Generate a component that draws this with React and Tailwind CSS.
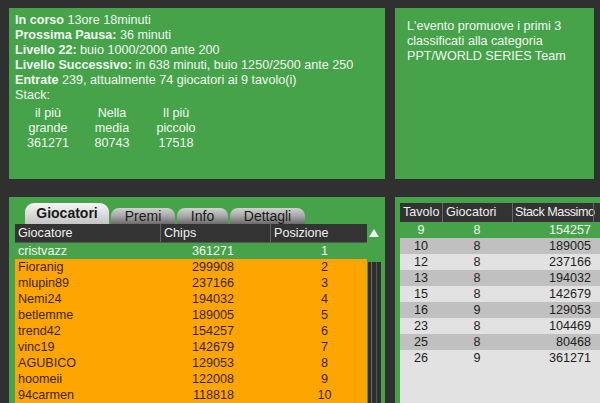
const players = [
  ['cristvazz', '361271', '1'],
  ['Fioranig', '299908', '2'],
  ['mlupin89', '237166', '3'],
  ['Nemi24', '194032', '4'],
  ['betlemme', '189005', '5'],
  ['trend42', '154257', '6'],
  ['vinc19', '142679', '7'],
  ['AGUBICO', '129053', '8'],
  ['hoomeii', '122008', '9'],
  ['94carmen', '118818', '10'],
]

const tables = [
  ['9', '8', '154257'],
  ['10', '8', '189005'],
  ['12', '8', '237166'],
  ['13', '8', '194032'],
  ['15', '8', '142679'],
  ['16', '9', '129053'],
  ['23', '8', '104469'],
  ['25', '8', '80468'],
  ['26', '9', '361271'],
]

const font = { fontFamily: '"Liberation Sans", Arial, sans-serif' }

function Tab({ label, active, width }) {
  if (active) {
    return (
      <div
        className={`${width} h-[21px] rounded-t-[9px] bg-gradient-to-b from-[#f6f6f6] to-[#c4c4c4] flex items-center justify-center text-[14px] font-bold text-[#1a1a1a]`}
      >
        {label}
      </div>
    )
  }
  return (
    <div
      className={`${width} h-[16px] rounded-t-[8px] bg-gradient-to-b from-[#d2d2d2] via-[#a8a8a8] to-[#6a6a6a] flex items-center justify-center text-[14px] text-[#1a1a1a] leading-none`}
    >
      {label}
    </div>
  )
}

export default function App() {
  return (
    <div className="w-[600px] h-[403px] overflow-hidden bg-[#303030] pl-[9px] pt-[8px] text-[12.6px]" style={font}>
      {/* top row */}
      <div className="flex gap-[10px] h-[171px]">
        <div className="w-[376px] bg-[#47a34a] text-[#f1f8f1] pl-[6px] pt-[5px] leading-[15px]">
          <div><b>In corso</b> 13ore 18minuti</div>
          <div><b>Prossima Pausa:</b> 36 minuti</div>
          <div><b>Livello 22:</b> buio 1000/2000 ante 200</div>
          <div><b>Livello Successivo:</b> in 638 minuti, buio 1250/2500 ante 250</div>
          <div><b>Entrate</b> 239, attualmente 74 giocatori ai 9 tavolo(i)</div>
          <div>Stack:</div>
          <div className="flex mt-[3px] ml-[1px] text-center">
            <div className="w-[64px]">il più<br />grande<br />361271</div>
            <div className="w-[64px]">Nella<br />media<br />80743</div>
            <div className="w-[64px]">Il più<br />piccolo<br />17518</div>
          </div>
        </div>
        <div className="w-[199px] bg-[#47a34a] text-[#f1f8f1] px-[12px] pt-[11px] leading-[15px]">
          L'evento promuove i primi 3 classificati alla categoria PPT/WORLD SERIES Team
        </div>
      </div>

      {/* bottom row */}
      <div className="flex gap-[10px] mt-[18px] h-[220px]">
        <div className="w-[376px] shrink-0 bg-[#47a34a] pl-[6px] pt-[6px]">
          <div className="flex items-end gap-[2px] pl-[10px]">
            <Tab label="Giocatori" active width="w-[84px]" />
            <Tab label="Premi" width="w-[64px]" />
            <Tab label="Info" width="w-[51px]" />
            <Tab label="Dettagli" width="w-[75px]" />
          </div>
          <div className="flex">
            <div className="w-[352px]">
              <div className="flex h-[19px] bg-[#333333] text-[#f0f0f0] items-center border-b border-[#555]">
                <div className="w-[145px] pl-[3px]">Giocatore</div>
                <div className="w-[110px] pl-[3px] border-l border-[#666] h-full flex items-center">Chips</div>
                <div className="flex-1 pl-[3px] border-l border-[#666] h-full flex items-center">Posizione</div>
              </div>
              {players.map(([name, chips, pos], i) => (
                <div
                  key={name}
                  className={`flex h-[16px] items-center ${i === 0 ? 'bg-[#47a34a] text-[#f1f8f1]' : 'bg-[#ffa500] text-[#3a2600]'}`}
                >
                  <div className="w-[145px] pl-[3px]">{name}</div>
                  <div className="w-[110px] text-right pr-[36px]">{chips}</div>
                  <div className="flex-1 text-center pl-[12px]">{pos}</div>
                </div>
              ))}
            </div>
            <div className="w-[14px] flex flex-col items-center">
              <svg width="10" height="8" viewBox="0 0 10 8" className="mt-[5px]">
                <path d="M5 0 L10 8 L0 8 Z" fill="#f2f2f2" />
              </svg>
              <div className="mt-[25px] w-[13px] flex-1 bg-[#2e2e2e] flex justify-center gap-[4px]">
                <div className="w-[1px] bg-[#6a6a6a]" />
                <div className="w-[1px] bg-[#555]" />
              </div>
            </div>
          </div>
        </div>

        <div className="w-[215px] shrink-0 bg-[#47a34a] pl-[5px] pt-[6px]">
          <div className="h-full bg-[#e2e2e2]">
            <div className="flex h-[19px] bg-[#333333] text-[#f0f0f0] items-center whitespace-nowrap">
              <div className="w-[42px] pl-[3px] shrink-0">Tavolo</div>
              <div className="w-[70px] pl-[3px] shrink-0 border-l border-[#666] h-full flex items-center">Giocatori</div>
              <div className="w-[81px] pl-[2px] shrink-0 border-l border-[#666] h-full flex items-center tracking-[-0.45px]">Stack Massimo</div>
              <div className="flex-1 border-l border-[#666] h-full" />
            </div>
            {tables.map(([t, g, s], i) => (
              <div
                key={t}
                className={`flex h-[16px] items-center ${
                  i === 0 ? 'bg-[#47a34a] text-[#f1f8f1]' : i % 2 === 1 ? 'bg-[#c0c0c0] text-[#222]' : 'bg-[#e2e2e2] text-[#222]'
                }`}
              >
                <div className="w-[42px] text-center shrink-0">{t}</div>
                <div className="w-[70px] text-center shrink-0">{g}</div>
                <div className="w-[81px] text-right pr-[2px] shrink-0">{s}</div>
              </div>
            ))}
          </div>
        </div>
      </div>
    </div>
  )
}
